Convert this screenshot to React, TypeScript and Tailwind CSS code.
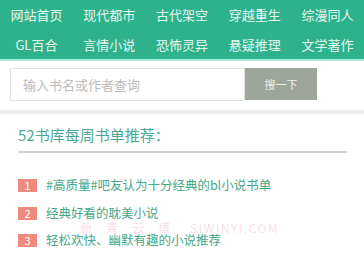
import type { ReactNode } from 'react';

const navRows = [
  ['网站首页', '现代都市', '古代架空', '穿越重生', '综漫同人'],
  ['GL百合', '言情小说', '恐怖灵异', '悬疑推理', '文学著作'],
];

const books = [
  '#高质量#吧友认为十分经典的bl小说书单',
  '经典好看的耽美小说',
  '轻松欢快、幽默有趣的小说推荐',
];

function NavCell({ children }: { children: ReactNode }) {
  return (
    <a className="flex items-center justify-center text-[13px] text-[#e6f6ef]">
      {children}
    </a>
  );
}

export default function App() {
  return (
    <div
      className="relative w-[364px] h-[256px] overflow-hidden bg-white"
      style={{ fontFamily: '"Noto Sans CJK SC", "Noto Sans", sans-serif' }}
    >
      {/* top nav */}
      <nav className="bg-[#2db28c] border-b-2 border-[#a8ecdf]">
        {navRows.map((row, i) => (
          <div key={i} className="grid grid-cols-5 h-[29.5px]">
            {row.map((t) => (
              <NavCell key={t}>{t}</NavCell>
            ))}
          </div>
        ))}
      </nav>

      {/* search */}
      <div className="flex pt-[7px] pl-[10px] h-[49px]">
        <div className="w-[235px] h-[33px] border border-[#e3e3e3] flex items-center pl-[12px] text-[13px] text-[#bcbcbc]">
          输入书名或作者查询
        </div>
        <button className="w-[72px] h-[32px] bg-[#9ea69c] text-[#eef0ec] text-[11px]">
          搜一下
        </button>
      </div>
      <div className="h-[4px] bg-[#efefef]" />

      {/* weekly list */}
      <div className="px-[18px]">
        <h2 className="h-[39px] flex items-end pb-[5px] border-b-2 border-[#d2d2d2] text-[15px] text-[#4aa897] mr-[-1px]">
          52书库每周书单推荐：
        </h2>
        <ul className="pt-[26px] flex flex-col gap-[14.5px]">
          {books.map((b, i) => (
            <li key={b} className="flex items-center h-[13px]">
              <span className="w-[19px] h-[13px] bg-[#ef8a80] text-white text-[11px] leading-[13px] text-center">
                {i + 1}
              </span>
              <span className="ml-[9px] text-[12.5px] leading-none text-[#44a88a]">{b}</span>
            </li>
          ))}
        </ul>
      </div>

      {/* watermark */}
      <div className="absolute left-[80px] top-[222px] flex items-center leading-[12px] text-[#f9d3e2] opacity-70">
        <span className="text-[12px] tracking-[14px]">新青云博</span>
        <span className="ml-[6px] text-[12px] tracking-[1.5px]">SIWINYI.COM</span>
      </div>
    </div>
  );
}
